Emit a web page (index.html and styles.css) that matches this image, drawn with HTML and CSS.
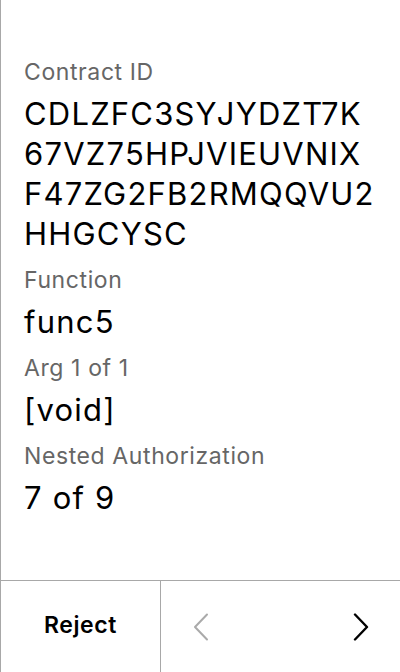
FILE: index.html
```html
<!DOCTYPE html>
<html>
<head>
<meta charset="utf-8">
<link rel="stylesheet" href="styles.css">
</head>
<body>
<div class="screen">
  <main class="content">
    <div class="field">
      <div class="label">Contract ID</div>
      <div class="value break">CDLZFC3SYJYDZT7K67VZ75HPJVIEUVNIXF47ZG2FB2RMQQVU2HHGCYSC</div>
    </div>
    <div class="field">
      <div class="label">Function</div>
      <div class="value">func5</div>
    </div>
    <div class="field">
      <div class="label">Arg 1 of 1</div>
      <div class="value">[void]</div>
    </div>
    <div class="field">
      <div class="label">Nested Authorization</div>
      <div class="value">7 of 9</div>
    </div>
  </main>
  <footer class="footer">
    <button class="reject">Reject</button>
    <div class="nav">
      <span class="chev disabled">
        <svg width="16" height="28" viewBox="0 0 16 28"><path d="M14 1.5 L2 14 L14 26.5" fill="none" stroke="currentColor" stroke-width="2" stroke-linecap="round" stroke-linejoin="round"/></svg>
      </span>
      <span class="chev">
        <svg width="16" height="28" viewBox="0 0 16 28"><path d="M2 1.5 L14 14 L2 26.5" fill="none" stroke="currentColor" stroke-width="2.4" stroke-linecap="round" stroke-linejoin="round"/></svg>
      </span>
    </div>
  </footer>
</div>
</body>
</html>
```

FILE: styles.css
```css
* { box-sizing: border-box; }
html, body { margin: 0; padding: 0; background: #fff; }
body { font-family: Inter, "Noto Sans", sans-serif; color: #000; }
.screen {
  width: 400px;
  height: 672px;
  border-left: 1px solid #a8a8a8;
  display: flex;
  flex-direction: column;
}
.content {
  flex: 1;
  padding: 56px 24px 0 23px;
  display: flex;
  flex-direction: column;
  gap: 10px;
}
.field { display: flex; flex-direction: column; gap: 6px; }
.label {
  font-size: 23px;
  line-height: 32px;
  letter-spacing: 0.6px;
  color: #666;
}
.value {
  font-size: 31px;
  line-height: 40px;
  letter-spacing: 1.2px;
  color: #000;
}
.break { word-break: break-all; }
.footer {
  height: 92px;
  border-top: 1px solid #a8a8a8;
  display: flex;
}
.reject {
  width: 160px;
  border: none;
  border-right: 1px solid #a8a8a8;
  background: none;
  font-family: inherit;
  font-size: 23px;
  font-weight: 600;
  letter-spacing: 0.6px;
  color: #000;
  padding: 0 0 4px;
}
.nav {
  flex: 1;
  display: flex;
  align-items: center;
  justify-content: space-between;
  padding: 0 31px 0 32px;
}
.chev { display: flex; color: #000; }
.chev.disabled { color: #aaa; }
```
